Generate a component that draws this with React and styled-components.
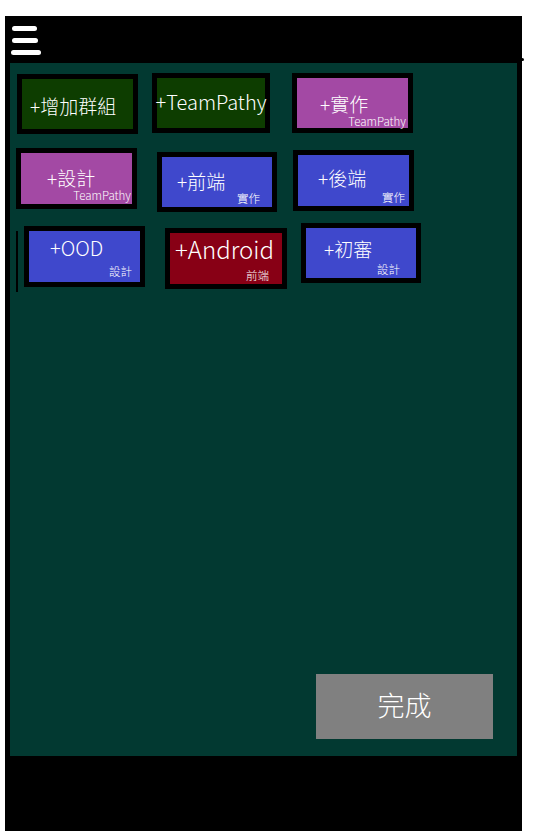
import React from "react"
import styled, { createGlobalStyle } from "styled-components"

const GlobalStyle = createGlobalStyle`
  html, body {
    margin: 0;
    padding: 0;
    background: #ffffff;
  }
  body {
    font-family: "Noto Sans CJK TC", "Noto Sans", sans-serif;
  }
`

const Frame = styled.div`
  margin: 16px 0 0 5px;
  width: 517px;
  height: 815px;
  background: #000000;
  display: flex;
  flex-direction: column;
  position: relative;
`

const Header = styled.header`
  height: 47px;
  display: flex;
  align-items: flex-start;
  padding: 8px 0 0 5px;
  box-sizing: border-box;
`

const Dot = styled.span`
  position: absolute;
  right: -2px;
  top: 42px;
  width: 3px;
  height: 3px;
  border-radius: 50%;
  background: #000;
`

const Content = styled.main`
  margin: 0 5px;
  height: 693px;
  background: #023931;
  display: flex;
  flex-direction: column;
`

const Row = styled.div`
  display: flex;
  align-items: flex-start;
`

const Tile = styled.button`
  all: unset;
  box-sizing: border-box;
  position: relative;
  width: ${p => p.$w}px;
  height: ${p => p.$h}px;
  margin-left: ${p => p.$ml}px;
  margin-top: ${p => p.$mt}px;
  border: 5px solid #000;
  background: ${p => p.$bg};
  display: flex;
  align-items: center;
  justify-content: ${p => (p.$center ? "center" : "flex-start")};
  cursor: pointer;
`

const Label = styled.span`
  padding-left: ${p => p.$pl}px;
  margin-top: ${p => p.$dy}px;
  font-size: ${p => p.$size}px;
  font-weight: 300;
  color: #ffffff;
  white-space: nowrap;
  line-height: 1;
`

const Sub = styled.span`
  position: absolute;
  right: ${p => p.$pr}px;
  bottom: ${p => p.$sb}px;
  font-size: 11.5px;
  font-weight: 300;
  line-height: 1;
  color: #ffffff;
  white-space: nowrap;
`

const Rule = styled.span`
  width: 2px;
  height: 61px;
  margin-left: 6px;
  margin-top: 19px;
  background: #000;
`

const DoneButton = styled.button`
  all: unset;
  box-sizing: border-box;
  margin-top: auto;
  margin-bottom: 17px;
  margin-right: 24px;
  align-self: flex-end;
  width: 177px;
  height: 65px;
  padding-bottom: 5px;
  background: #808080;
  color: #ffffff;
  font-size: 27px;
  font-weight: 300;
  display: flex;
  align-items: center;
  justify-content: center;
  cursor: pointer;
`

const Menu = () => (
  <svg width="34" height="32" viewBox="0 0 34 32">
    <g stroke="#fff" strokeWidth="5" strokeLinecap="round">
      <line x1="4.5" y1="4.5" x2="24.5" y2="4.5" />
      <line x1="4.5" y1="16.5" x2="25.5" y2="16.5" />
      <line x1="3.5" y1="28.5" x2="28.5" y2="28.5" />
    </g>
  </svg>
)

const GREEN = "#0d3d00"
const PURPLE = "#a349a4"
const BLUE = "#3f48cc"
const RED = "#880015"

const rows = [
  [
    { label: "+增加群組", bg: GREEN, w: 121, h: 60, ml: 7, mt: 11, pl: 8, dy: 2, size: 19 },
    { label: "+TeamPathy", bg: GREEN, w: 118, h: 60, ml: 14, mt: 10, center: true, dy: -3, size: 20 },
    { label: "+實作", sub: "TeamPathy", bg: PURPLE, w: 121, h: 60, ml: 22, mt: 10, pl: 23, dy: 0, pr: 2, sb: 1 },
  ],
  [
    { label: "+設計", sub: "TeamPathy", bg: PURPLE, w: 121, h: 61, ml: 6, mt: 14, pl: 26, dy: -3, pr: 1, sb: 3 },
    { label: "+前端", sub: "實作", bg: BLUE, w: 120, h: 60, ml: 20, mt: 18, pl: 15, dy: -4, pr: 12, sb: 3 },
    { label: "+後端", sub: "實作", bg: BLUE, w: 121, h: 61, ml: 16, mt: 16, pl: 20, dy: -6, pr: 4, sb: 3 },
  ],
]

const lastRow = [
  { label: "+OOD", sub: "設計", bg: BLUE, w: 121, h: 61, ml: 6, mt: 14, pl: 21, dy: -18, pr: 8, sb: 5, size: 20 },
  { label: "+Android", sub: "前端", bg: RED, w: 122, h: 61, ml: 20, mt: 16, pl: 5, dy: -19, pr: 13, sb: 3, size: 24 },
  { label: "+初審", sub: "設計", bg: BLUE, w: 120, h: 60, ml: 14, mt: 11, pl: 18, dy: -10, pr: 16, sb: 3 },
]

const GroupTile = ({ t }) => (
  <Tile $w={t.w} $h={t.h} $ml={t.ml} $mt={t.mt} $bg={t.bg} $center={t.center}>
    <Label $pl={t.pl || 0} $dy={t.dy} $size={t.size || 19}>
      {t.label}
    </Label>
    {t.sub && (
      <Sub $pr={t.pr} $sb={t.sb}>
        {t.sub}
      </Sub>
    )}
  </Tile>
)

const App = () => (
  <>
    <GlobalStyle />
    <Frame>
      <Header>
        <Menu />
      </Header>
      <Dot />
      <Content>
        {rows.map((row, i) => (
          <Row key={i}>
            {row.map(t => (
              <GroupTile key={t.label} t={t} />
            ))}
          </Row>
        ))}
        <Row>
          <Rule />
          {lastRow.map(t => (
            <GroupTile key={t.label} t={t} />
          ))}
        </Row>
        <DoneButton>完成</DoneButton>
      </Content>
    </Frame>
  </>
)

export default App
